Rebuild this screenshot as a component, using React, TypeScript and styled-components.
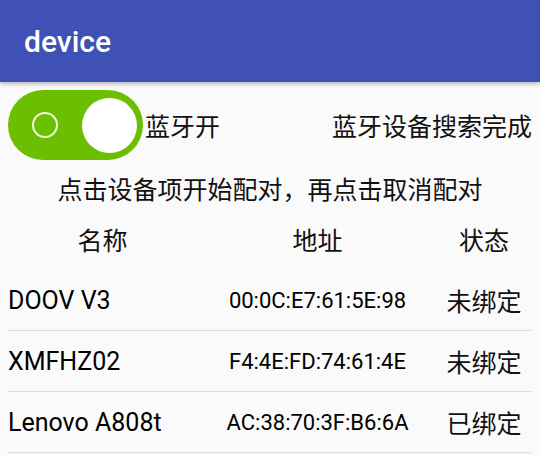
import React from "react";
import styled, { createGlobalStyle } from "styled-components";

const GlobalStyle = createGlobalStyle`
  html, body { margin: 0; padding: 0; background: #fafafa; }
  body { font-family: Roboto, "Noto Sans CJK SC", sans-serif; color: #111; }
`;

const Page = styled.div`
  width: 540px;
  height: 455px;
  overflow: hidden;
  background: #fafafa;
`;

const AppBar = styled.header`
  height: 82px;
  background: #3f51b5;
  display: flex;
  align-items: center;
  padding-left: 24px;
  box-shadow: 0 2px 4px rgba(0, 0, 0, 0.28);
  position: relative;
  z-index: 1;
`;

const Title = styled.h1`
  margin: 0;
  font-family: Roboto, sans-serif;
  font-weight: 500;
  font-size: 30px;
  color: #fff;
  line-height: 1;
  padding-top: 2px;
`;

const ToggleRow = styled.div`
  display: flex;
  align-items: center;
  padding: 8px 8px 0 8px;
  height: 70px;
`;

const Switch = styled.div<{ $on: boolean }>`
  width: 135px;
  height: 70px;
  border-radius: 35px;
  background: ${(p) => (p.$on ? "#6cbf00" : "#bdbdbd")};
  display: flex;
  align-items: center;
  justify-content: space-between;
  padding: 0 6px 0 24px;
  box-sizing: border-box;
  flex-shrink: 0;
`;

const Ring = styled.div`
  width: 26px;
  height: 26px;
  border-radius: 50%;
  border: 2px solid rgba(255, 255, 255, 0.9);
  box-sizing: border-box;
`;

const Knob = styled.div`
  width: 55px;
  height: 55px;
  border-radius: 50%;
  background: #fff;
`;

const Label = styled.span`
  font-family: "Noto Sans CJK SC", sans-serif;
  font-size: 25px;
  line-height: 1;
  margin-left: 2px;
  flex: 1;
`;

const Status = styled.span`
  font-family: "Noto Sans CJK SC", sans-serif;
  font-size: 25px;
  line-height: 1;
`;

const Hint = styled.div`
  font-family: "Noto Sans CJK SC", sans-serif;
  font-size: 25px;
  text-align: center;
  height: 36px;
  line-height: 36px;
  margin-top: 10px;
`;

const Table = styled.div`
  padding: 0 8px;
`;

const Row = styled.div<{ $header?: boolean }>`
  display: grid;
  grid-template-columns: 189px 241px 92px;
  align-items: center;
  height: ${(p) => (p.$header ? "64px" : "60px")};
  border-bottom: ${(p) => (p.$header ? "none" : "1px solid #dcdcdc")};
`;

const HeadCell = styled.div`
  font-family: "Noto Sans CJK SC", sans-serif;
  font-size: 25px;
  text-align: center;
  padding-top: 2px;
`;

const NameCell = styled.div`
  font-family: Roboto, sans-serif;
  font-size: 25px;
  color: #000;
`;

const AddrCell = styled.div`
  font-family: Roboto, sans-serif;
  font-size: 22px;
  text-align: center;
  color: #000;
`;

const StateCell = styled.div`
  font-family: "Noto Sans CJK SC", sans-serif;
  font-size: 25px;
  text-align: center;
`;

const devices = [
  { name: "DOOV V3", addr: "00:0C:E7:61:5E:98", state: "未绑定" },
  { name: "XMFHZ02", addr: "F4:4E:FD:74:61:4E", state: "未绑定" },
  { name: "Lenovo A808t", addr: "AC:38:70:3F:B6:6A", state: "已绑定" },
];

export default function App() {
  return (
    <Page>
      <GlobalStyle />
      <AppBar>
        <Title>device</Title>
      </AppBar>
      <ToggleRow>
        <Switch $on>
          <Ring />
          <Knob />
        </Switch>
        <Label>蓝牙开</Label>
        <Status>蓝牙设备搜索完成</Status>
      </ToggleRow>
      <Hint>点击设备项开始配对，再点击取消配对</Hint>
      <Table>
        <Row $header>
          <HeadCell>名称</HeadCell>
          <HeadCell>地址</HeadCell>
          <HeadCell>状态</HeadCell>
        </Row>
        {devices.map((d) => (
          <Row key={d.addr}>
            <NameCell>{d.name}</NameCell>
            <AddrCell>{d.addr}</AddrCell>
            <StateCell>{d.state}</StateCell>
          </Row>
        ))}
      </Table>
    </Page>
  );
}
